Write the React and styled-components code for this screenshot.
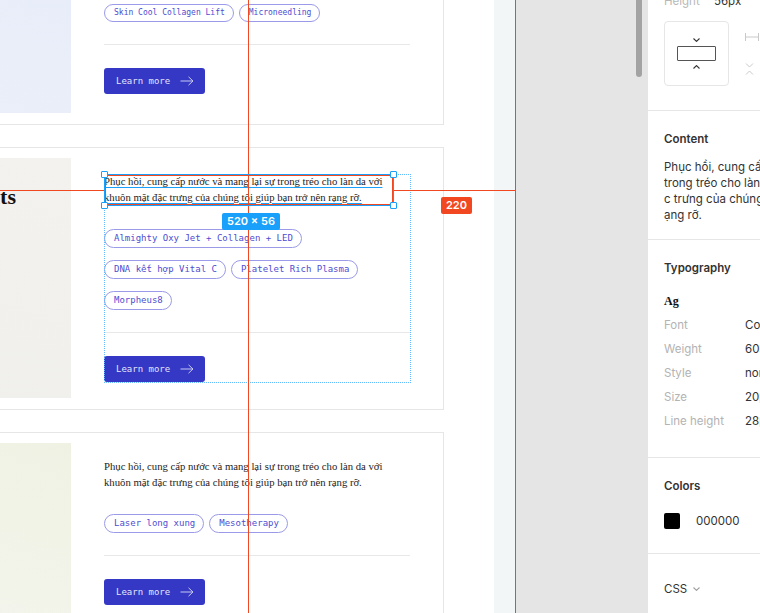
import styled, { createGlobalStyle } from "styled-components"

const GlobalStyle = createGlobalStyle`
    html, body {
        margin: 0;
        padding: 0;
    }
    body {
        width: 760px;
        height: 613px;
        overflow: hidden;
        background: #fff;
        font-family: Inter, "Noto Sans", sans-serif;
    }
    * {
        box-sizing: border-box;
    }
`

const RED = "#f24822"
const BLUE = "#18a0fb"

const Workspace = styled.div`
    display: flex;
    height: 613px;
    width: 760px;
    overflow: hidden;
`

/* ---------- canvas ---------- */

const Canvas = styled.div`
    position: relative;
    flex: 0 0 516px;
    display: flex;
    overflow: hidden;
`

const Frame = styled.div`
    flex: 0 0 494px;
    background: #fff;
    overflow: hidden;
`

const Strip = styled.div`
    flex: 1;
    background: #f3f6f7;
`

const Cards = styled.div`
    display: flex;
    flex-direction: column;
    gap: 22px;
    width: 624px;
    margin: -78px 0 0 -180px;
`

const Card = styled.div`
    display: flex;
    border: 1px solid #e6e6e6;
    background: #fff;
`

const tones = {
    blue: "linear-gradient(200deg, #e7edf9 0%, #ebeff9 100%)",
    sand: "linear-gradient(200deg, #f4f2ee 0%, #efefec 100%)",
    green: "linear-gradient(200deg, #eff2e3 0%, #f4f5ee 100%)",
}

const ImagePanel = styled.div`
    flex: 0 0 240px;
    margin: 10px 0 11px 10px;
    background: ${(p) => tones[p.$tone]};
    display: flex;
    justify-content: flex-end;
    align-items: flex-start;
    padding: 26px 55px 0 0;
    overflow: hidden;
`

const Title = styled.h3`
    margin: 0;
    font: 700 22px/26px "Liberation Serif", serif;
    color: #111;
    white-space: nowrap;
`

const Body = styled.div`
    flex: 0 0 372px;
    padding: 26px 33px ${(p) => p.$pb || 27}px;
    display: flex;
    flex-direction: column;
`

const Para = styled.p`
    margin: 0;
    max-width: 289px;
    font: 400 10.7px/15.5px "Liberation Serif", serif;
    color: #1c1c1c;
    ${(p) =>
        p.$hover &&
        `
        text-decoration: underline;
        text-decoration-color: ${BLUE};
        text-decoration-thickness: 1px;
        text-underline-offset: 2px;
    `}
`

const Tags = styled.div`
    display: flex;
    flex-wrap: wrap;
    gap: 12px 5px;
    margin-top: 24px;
`

const Tag = styled.span`
    display: inline-flex;
    align-items: center;
    height: ${(p) => (p.$small ? 18 : 19)}px;
    padding: 0 8px 0 9px;
    border: 1px solid #9a9ae8;
    border-radius: 999px;
    font: 400 ${(p) => (p.$small ? 8 : 9)}px/1 "DejaVu Sans Mono", "Liberation Mono", monospace;
    color: #4d4dd2;
    white-space: nowrap;
`

const Rule = styled.div`
    height: 1px;
    background: #e8e8e8;
    margin: 22px 0 23px;
`

const LearnButton = styled.button`
    align-self: flex-start;
    display: flex;
    align-items: center;
    gap: 10px;
    height: 26px;
    padding: 0 11px 0 12px;
    border: none;
    border-radius: 3px;
    background: #3438c4;
    color: #e4e5fb;
    font: 400 9px/1 "DejaVu Sans Mono", "Liberation Mono", monospace;
    cursor: pointer;
`

const Arrow = () => (
    <svg width="14" height="10" viewBox="0 0 14 10" fill="none" stroke="#c6c9f5" strokeWidth="1">
        <path d="M0.5 5h12.5M8.5 0.8L13 5l-4.5 4.2" />
    </svg>
)

/* ---------- measurement overlay ---------- */

const VGuide = styled.div`
    position: absolute;
    top: 0;
    bottom: 0;
    left: ${(p) => p.$x}px;
    width: 1px;
    background: ${RED};
`

const HGuide = styled.div`
    position: absolute;
    top: ${(p) => p.$y}px;
    left: ${(p) => p.$x}px;
    width: ${(p) => p.$w}px;
    height: 1px;
    background: ${RED};
`

const HoverFrame = styled.div`
    position: absolute;
    left: 104px;
    top: 174px;
    width: 307px;
    height: 209px;
    border: 1px dotted #62bcff;
`

const Selection = styled.div`
    position: absolute;
    left: 104px;
    top: 174px;
    width: 290px;
    height: 32px;
    border: 1px solid ${BLUE};
    box-shadow: inset 0 0 0 1px ${RED};
`

const Handle = styled.div`
    position: absolute;
    left: ${(p) => p.$x - 3}px;
    top: ${(p) => p.$y - 3}px;
    width: 7px;
    height: 7px;
    background: #fff;
    border: 1px solid ${BLUE};
    border-radius: 1px;
`

const Badge = styled.div`
    position: absolute;
    left: ${(p) => p.$x}px;
    top: ${(p) => p.$y}px;
    height: 17px;
    padding: 0 5px;
    display: flex;
    align-items: center;
    border-radius: 2px;
    background: ${(p) => p.$bg};
    color: #fff;
    font: 600 11px/1 Inter, "Noto Sans", sans-serif;
    white-space: nowrap;
`

/* ---------- gutter ---------- */

const Gutter = styled.div`
    flex: 0 0 132px;
    background: #e5e5e5;
    display: flex;
    justify-content: flex-end;
    padding-right: 6px;
`

const Thumb = styled.div`
    width: 6px;
    height: 82px;
    margin-top: -5px;
    border-radius: 3px;
    background: #a3a3a3;
`

/* ---------- inspector ---------- */

const Inspector = styled.aside`
    flex: 0 0 260px;
    background: #fff;
    color: #333;
    font: 400 11.5px/16px Inter, "Noto Sans", sans-serif;
`

const Section = styled.section`
    padding: ${(p) => p.$pt}px 16px ${(p) => p.$pb}px;
    border-bottom: ${(p) => (p.$last ? "none" : "1px solid #e6e6e6")};
`

const SectionTitle = styled.div`
    font-weight: 600;
    color: #333;
    margin-bottom: ${(p) => p.$gap}px;
`

const DimRow = styled.div`
    display: flex;
    margin-top: -7px;
    height: 16px;
`

const DimLabel = styled.span`
    width: 50px;
    color: #b8b8b8;
`

const ConstraintRow = styled.div`
    display: flex;
    gap: 16px;
    margin-top: 12px;
`

const AlignBox = styled.div`
    width: 65px;
    height: 65px;
    border: 1px solid #e6e6e6;
    border-radius: 4px;
    display: flex;
    flex-direction: column;
    align-items: center;
    justify-content: center;
    gap: 4px;
`

const AlignRect = styled.div`
    width: 39px;
    height: 15px;
    border: 1px solid #555;
    border-radius: 1px;
`

const ConstraintIcons = styled.div`
    display: flex;
    flex-direction: column;
    gap: 22px;
    padding-top: 12px;
`

const ContentText = styled.div`
    white-space: nowrap;
    color: #333;

    span {
        display: block;
    }
`

const SpecimenRow = styled.div`
    height: 24px;
    display: flex;
    align-items: center;
    font: 700 12px/1 "Liberation Serif", serif;
    color: #111;
`

const PropRow = styled.div`
    display: grid;
    grid-template-columns: 81px auto;
    height: 24px;
    align-items: center;
    white-space: nowrap;
`

const PropLabel = styled.span`
    color: #b3b3b3;
`

const SwatchRow = styled.div`
    display: flex;
    align-items: center;
    gap: 16px;
    height: 16px;
`

const Swatch = styled.div`
    width: 16px;
    height: 16px;
    border-radius: 2px;
    background: #000;
`

const CodeToggle = styled.div`
    display: flex;
    align-items: center;
    gap: 6px;
`

const Chevron = ({ up, color = "#333" }) => (
    <svg width="7" height="4" viewBox="0 0 7 4" fill="none" stroke={color} strokeWidth="1.1">
        <path d={up ? "M0.5 3.5L3.5 0.6l3 2.9" : "M0.5 0.5L3.5 3.4l3-2.9"} />
    </svg>
)

const HorizontalIcon = () => (
    <svg width="14" height="8" viewBox="0 0 14 8" fill="none" stroke="#c9c9c9" strokeWidth="1">
        <path d="M0.5 0v8M13.5 0v8M0.5 4h13" />
    </svg>
)

const VerticalIcon = () => (
    <svg width="9" height="12" viewBox="0 0 9 12" fill="none" stroke="#c9c9c9" strokeWidth="1">
        <path d="M1 0.5l3.5 3.5 3.5-3.5M1 11.5l3.5-3.5 3.5 3.5" />
    </svg>
)

const copy =
    "Phục hồi, cung cấp nước và mang lại sự trong tréo cho làn da với khuôn mặt đặc trưng của chúng tôi giúp bạn trở nên rạng rỡ."

const treatments = [
    {
        tone: "blue",
        text: "Làm sạch sâu, nâng cơ và tái tạo collagen giúp làn da săn chắc, mịn màng và tươi trẻ hơn.",
        tags: ["Skin Cool Collagen Lift", "Microneedling"],
        smallTags: true,
        pb: 30,
    },
    {
        tone: "sand",
        title: "Facial Treatments",
        text: copy,
        hover: true,
        tags: ["Almighty Oxy Jet + Collagen + LED", "DNA kết hợp Vital C", "Platelet Rich Plasma", "Morpheus8"],
    },
    {
        tone: "green",
        text: copy,
        tags: ["Laser long xung", "Mesotherapy"],
    },
]

const TreatmentCard = ({ item }) => (
    <Card>
        <ImagePanel $tone={item.tone}>{item.title && <Title>{item.title}</Title>}</ImagePanel>
        <Body $pb={item.pb}>
            <Para $hover={item.hover}>{item.text}</Para>
            <Tags>
                {item.tags.map((t) => (
                    <Tag key={t} $small={item.smallTags}>
                        {t}
                    </Tag>
                ))}
            </Tags>
            <Rule />
            <LearnButton>
                Learn more
                <Arrow />
            </LearnButton>
        </Body>
    </Card>
)

const App = () => {
    return (
        <>
            <GlobalStyle />
            <Workspace>
                <Canvas>
                    <Frame>
                        <Cards>
                            {treatments.map((item, i) => (
                                <TreatmentCard key={i} item={item} />
                            ))}
                        </Cards>
                    </Frame>
                    <Strip />

                    <HoverFrame />
                    <VGuide $x={248} />
                    <VGuide $x={515} />
                    <HGuide $x={0} $y={190} $w={104} />
                    <HGuide $x={394} $y={190} $w={121} />
                    <Selection />
                    <Handle $x={104} $y={174} />
                    <Handle $x={393} $y={174} />
                    <Handle $x={104} $y={205} />
                    <Handle $x={393} $y={205} />
                    <Badge $x={222} $y={213} $bg={BLUE}>520 × 56</Badge>
                    <Badge $x={441} $y={197} $bg={RED}>220</Badge>
                </Canvas>

                <Gutter>
                    <Thumb />
                </Gutter>

                <Inspector>
                    <Section $pt={0} $pb={24}>
                        <DimRow>
                            <DimLabel>Height</DimLabel>
                            <span>56px</span>
                        </DimRow>
                        <ConstraintRow>
                            <AlignBox>
                                <Chevron />
                                <AlignRect />
                                <Chevron up />
                            </AlignBox>
                            <ConstraintIcons>
                                <HorizontalIcon />
                                <VerticalIcon />
                            </ConstraintIcons>
                        </ConstraintRow>
                    </Section>

                    <Section $pt={20} $pb={16}>
                        <SectionTitle $gap={12}>Content</SectionTitle>
                        <ContentText>
                            <span>Phục hồi, cung cấp nước và mang lại sự </span>
                            <span>trong tréo cho làn da với khuôn mặt đặ</span>
                            <span>c trưng của chúng tôi giúp bạn trở nên r</span>
                            <span>ạng rỡ.</span>
                        </ContentText>
                    </Section>

                    <Section $pt={20} $pb={24}>
                        <SectionTitle $gap={13}>Typography</SectionTitle>
                        <SpecimenRow>Ag</SpecimenRow>
                        <PropRow>
                            <PropLabel>Font</PropLabel>
                            <span>Cormorant Garamond</span>
                        </PropRow>
                        <PropRow>
                            <PropLabel>Weight</PropLabel>
                            <span>600</span>
                        </PropRow>
                        <PropRow>
                            <PropLabel>Style</PropLabel>
                            <span>normal</span>
                        </PropRow>
                        <PropRow>
                            <PropLabel>Size</PropLabel>
                            <span>20px</span>
                        </PropRow>
                        <PropRow>
                            <PropLabel>Line height</PropLabel>
                            <span>28px</span>
                        </PropRow>
                    </Section>

                    <Section $pt={20} $pb={24}>
                        <SectionTitle $gap={19}>Colors</SectionTitle>
                        <SwatchRow>
                            <Swatch />
                            <span>000000</span>
                        </SwatchRow>
                    </Section>

                    <Section $pt={27} $pb={0} $last>
                        <CodeToggle>
                            CSS
                            <Chevron color="#a0a0a0" />
                        </CodeToggle>
                    </Section>
                </Inspector>
            </Workspace>
        </>
    )
}

export default App
